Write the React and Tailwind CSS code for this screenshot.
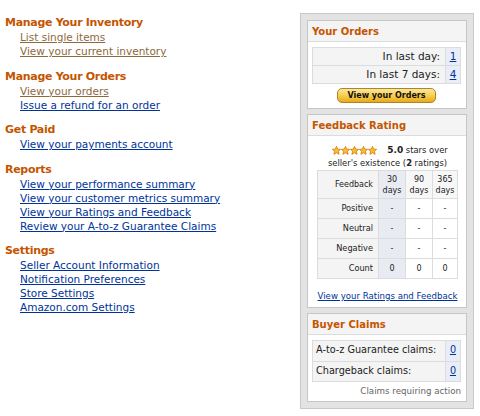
import React from "react";

const sections = [
  {
    title: "Manage Your Inventory",
    links: [
      { text: "List single items", visited: true },
      { text: "View your current inventory", visited: true },
    ],
  },
  {
    title: "Manage Your Orders",
    links: [
      { text: "View your orders", visited: true },
      { text: "Issue a refund for an order" },
    ],
  },
  { title: "Get Paid", links: [{ text: "View your payments account" }] },
  {
    title: "Reports",
    links: [
      { text: "View your performance summary" },
      { text: "View your customer metrics summary" },
      { text: "View your Ratings and Feedback" },
      { text: "Review your A-to-z Guarantee Claims" },
    ],
  },
  {
    title: "Settings",
    links: [
      { text: "Seller Account Information" },
      { text: "Notification Preferences" },
      { text: "Store Settings" },
      { text: "Amazon.com Settings" },
    ],
  },
];

const feedbackRows = [
  ["Positive", "-", "-", "-"],
  ["Neutral", "-", "-", "-"],
  ["Negative", "-", "-", "-"],
  ["Count", "0", "0", "0"],
];

function Star() {
  return (
    <svg width="9" height="9" viewBox="0 0 10 10">
      <polygon
        points="5,0.4 6.3,3.5 9.6,3.7 7.1,5.9 7.9,9.3 5,7.5 2.1,9.3 2.9,5.9 0.4,3.7 3.7,3.5"
        fill="#f7c02c"
        stroke="#d7780a"
        strokeWidth="0.9"
      />
    </svg>
  );
}

function Box({ title, children, last }) {
  return (
    <div className={`bg-white border border-[#c6c6c6] ${last ? "" : "mb-[5px]"}`}>
      <div className="h-[21px] bg-[#f4f4f4] border-b border-[#dcdcdc] px-[4px] flex items-center text-[10px] font-bold text-[#c45500]">
        {title}
      </div>
      {children}
    </div>
  );
}

export default function App() {
  return (
    <div
      className="w-[480px] h-[416px] bg-white flex text-[#333]"
      style={{ fontFamily: "'DejaVu Sans', Verdana, sans-serif" }}
    >
      <div className="w-[300px] pl-[5px] pt-[16px]">
        {sections.map((s) => (
          <div key={s.title} className="mb-[11.5px]">
            <div className="text-[11px] leading-[14px] font-bold tracking-[-0.3px] text-[#c45500]">
              {s.title}
            </div>
            <div className="pl-[15px]">
              {s.links.map((l) => (
                <div key={l.text} className="text-[10.5px] leading-[14px]">
                  <a
                    href="#"
                    className={`underline ${l.visited ? "text-[#8c6a3c]" : "text-[#003399]"}`}
                  >
                    {l.text}
                  </a>
                </div>
              ))}
            </div>
          </div>
        ))}
      </div>

      <div className="mt-[13px] w-[174px] h-[396px] bg-[#e3e3e3] border border-[#c9c9c9] p-[6px]">
        <Box title="Your Orders">
          <div className="pl-[4px] pr-[5px] pt-[5px] pb-[5px]">
            <table className="w-full border-collapse text-[10.5px]">
              <tbody>
                {[
                  ["In last day:", "1"],
                  ["In last 7 days:", "4"],
                ].map(([k, v]) => (
                  <tr key={k} className="h-[18px]">
                    <td className="border border-[#dcdcdc] bg-[#f4f4f4] text-right pr-[5px] text-[#222]">
                      {k}
                    </td>
                    <td className="border border-[#dcdcdc] bg-[#e9edf7] w-[15px] text-center">
                      <a href="#" className="underline text-[#003399]">
                        {v}
                      </a>
                    </td>
                  </tr>
                ))}
              </tbody>
            </table>
            <div className="flex justify-center mt-[4px]">
              <div className="w-[99px] h-[15px] rounded-[5px] border border-[#a6872c] bg-gradient-to-b from-[#fde59c] via-[#f8cf4a] to-[#e9a916] text-[8px] font-bold text-[#111] whitespace-nowrap flex items-center justify-center">
                View your Orders
              </div>
            </div>
          </div>
        </Box>

        <Box title="Feedback Rating">
          <div className="pl-[9px] pr-[8px] pt-[8px] pb-[5px] text-[8.4px] text-[#222]">
            <div className="flex items-center justify-center leading-[13px] gap-[10px] pl-[5px]">
              <div className="flex">
                <Star />
                <Star />
                <Star />
                <Star />
                <Star />
              </div>
              <span>
                <b className="text-[9px]">5.0</b> stars over
              </span>
            </div>
            <div className="text-center leading-[13px] whitespace-nowrap">
              seller's existence (<b>2</b> ratings)
            </div>
            <table className="w-full border-collapse text-[8px] table-fixed">
              <thead>
                <tr className="h-[28px]">
                  <td className="border border-[#dcdcdc] bg-[#f4f4f4] text-right pr-[5px] w-[61px]">
                    Feedback
                  </td>
                  <td className="border border-[#dcdcdc] bg-[#e9ebf3] text-center leading-[11px] w-[27px]">
                    30
                    <br />
                    days
                  </td>
                  <td className="border border-[#dcdcdc] bg-[#f7f7f7] text-center leading-[11px] w-[27px]">
                    90
                    <br />
                    days
                  </td>
                  <td className="border border-[#dcdcdc] bg-[#f7f7f7] text-center leading-[11px]">
                    365
                    <br />
                    days
                  </td>
                </tr>
              </thead>
              <tbody>
                {feedbackRows.map((r) => (
                  <tr key={r[0]} className="h-[20px]">
                    <td className="border border-[#dcdcdc] bg-[#f4f4f4] text-right pr-[5px] text-[8.2px]">
                      {r[0]}
                    </td>
                    <td className="border border-[#dcdcdc] bg-[#e9ebf3] text-center">{r[1]}</td>
                    <td className="border border-[#dcdcdc] text-center">{r[2]}</td>
                    <td className="border border-[#dcdcdc] text-center">{r[3]}</td>
                  </tr>
                ))}
              </tbody>
            </table>
            <div className="mt-[11px] text-center leading-[12px] whitespace-nowrap">
              <a href="#" className="underline text-[#003399] text-[8.6px]">
                View your Ratings and Feedback
              </a>
            </div>
          </div>
        </Box>

        <Box title="Buyer Claims" last>
          <div className="pl-[4px] pr-[5px] pt-[5px] pb-[4px]">
            <table className="w-full border-collapse text-[9.7px]">
              <tbody>
                {[
                  ["A-to-z Guarantee claims:", "0"],
                  ["Chargeback claims:", "0"],
                ].map(([k, v]) => (
                  <tr key={k} className="h-[20.5px]">
                    <td className="border border-[#dcdcdc] bg-[#f4f4f4] pl-[3px] text-[#222] whitespace-nowrap">
                      {k}
                    </td>
                    <td className="border border-[#dcdcdc] bg-[#e9edf7] w-[15px] text-center">
                      <a href="#" className="underline text-[#003399]">
                        {v}
                      </a>
                    </td>
                  </tr>
                ))}
              </tbody>
            </table>
            <div className="text-right text-[8.7px] leading-[12px] text-[#666] mt-[3px]">
              Claims requiring action
            </div>
          </div>
        </Box>
      </div>
    </div>
  );
}
